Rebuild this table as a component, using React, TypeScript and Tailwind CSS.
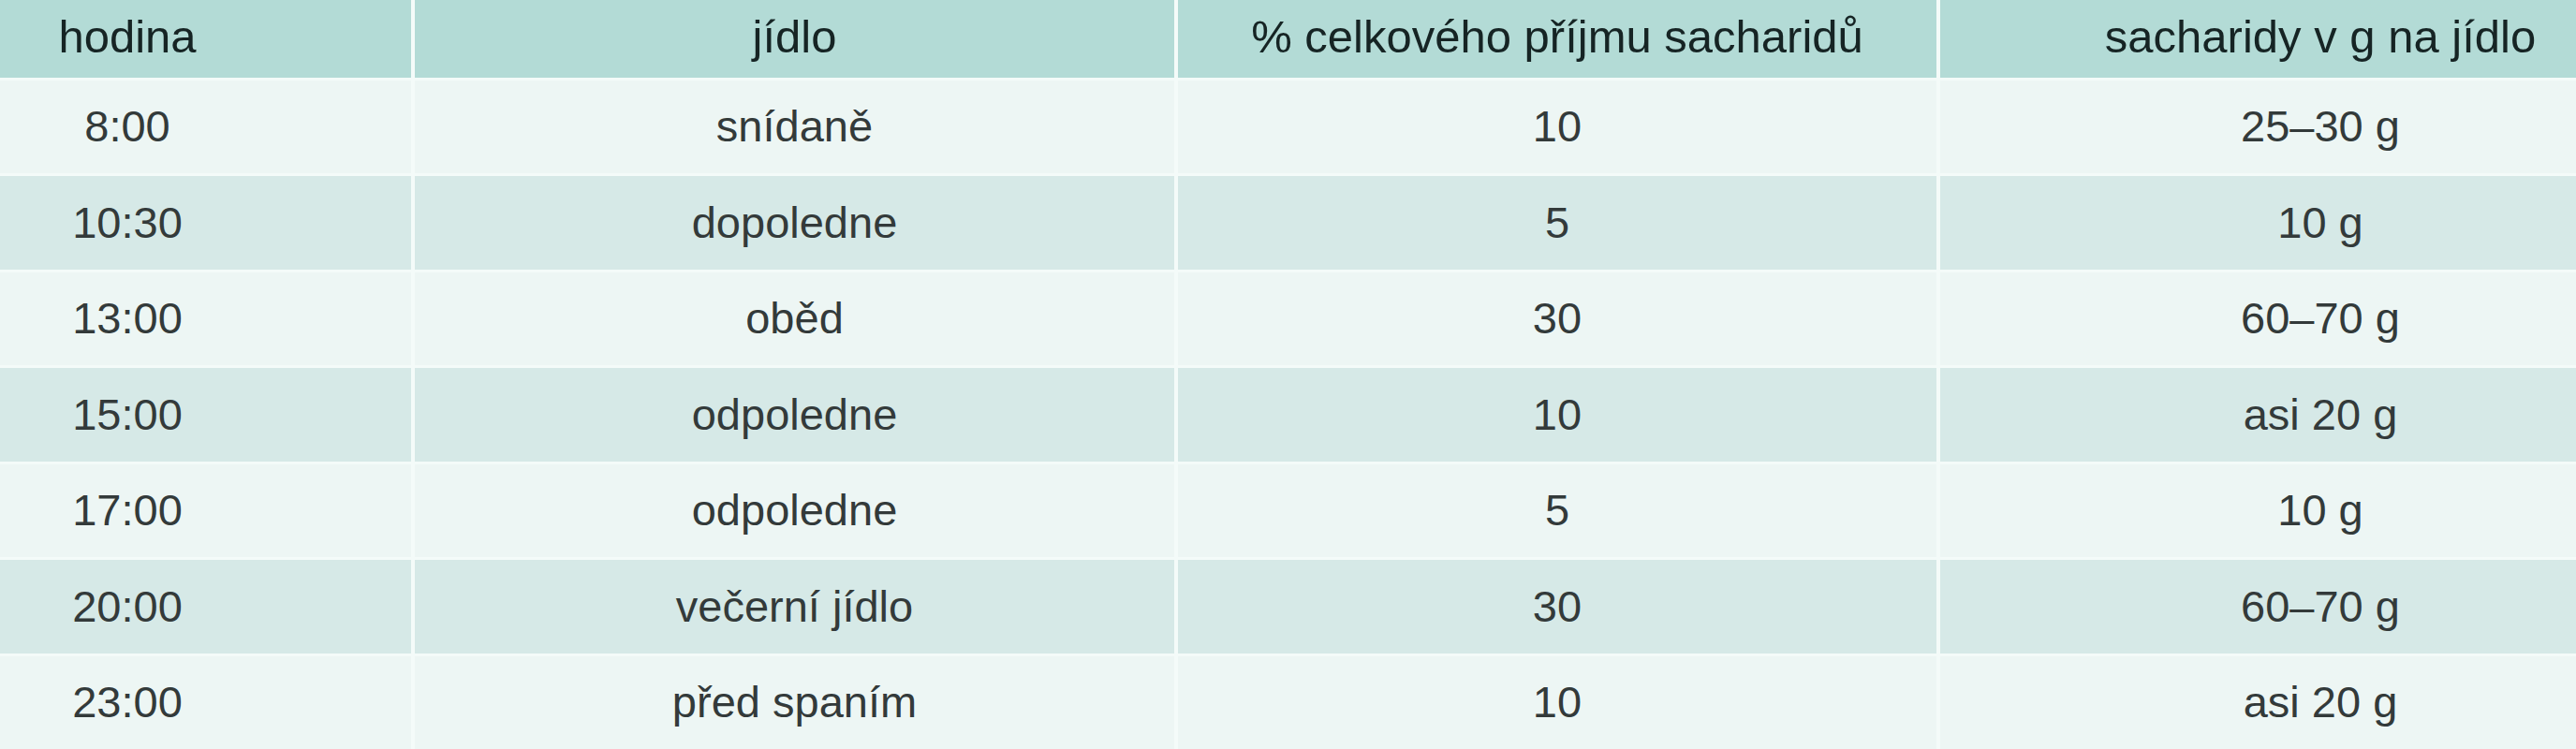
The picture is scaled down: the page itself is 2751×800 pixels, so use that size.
import React from "react";

const rows: [string, string, string, string][] = [
  ["8:00", "snídaně", "10", "25–30 g"],
  ["10:30", "dopoledne", "5", "10 g"],
  ["13:00", "oběd", "30", "60–70 g"],
  ["15:00", "odpoledne", "10", "asi 20 g"],
  ["17:00", "odpoledne", "5", "10 g"],
  ["20:00", "večerní jídlo", "30", "60–70 g"],
  ["23:00", "před spaním", "10", "asi 20 g"],
];

export default function App() {
  return (
    <div className="w-[2751px] h-[800px] overflow-hidden bg-[#f4fbf9]" style={{ fontFamily: '"Liberation Sans", Arial, sans-serif' }}>
      <div className="grid w-[2884px] h-[800px] grid-cols-[439px_811px_810px_812px] grid-rows-[83px_repeat(7,1fr)] gap-x-[4px] gap-y-[3px] bg-[#f4fbf9]">
        <div className="bg-[#b3dbd6] flex items-center justify-center pr-[167px] pb-[4px] text-[49px] text-[#162424]">hodina</div>
        <div className="bg-[#b3dbd6] flex items-center justify-center pb-[4px] text-[49px] text-[#162424]">jídlo</div>
        <div className="bg-[#b3dbd6] flex items-center justify-center pb-[4px] text-[49px] text-[#162424]">% celkového příjmu sacharidů</div>
        <div className="bg-[#b3dbd6] flex items-center justify-center pb-[4px] text-[49px] text-[#162424]">sacharidy v g na jídlo</div>
        {rows.map((r, i) => {
          const bg = i % 2 === 0 ? "bg-[#edf6f4]" : "bg-[#d6e9e7]";
          return (
            <React.Fragment key={i}>
              <div className={`${bg} flex items-center justify-center pr-[167px] text-[47px] text-[#333a3a]`}>{r[0]}</div>
              <div className={`${bg} flex items-center justify-center text-[47px] text-[#333a3a]`}>{r[1]}</div>
              <div className={`${bg} flex items-center justify-center text-[47px] text-[#333a3a]`}>{r[2]}</div>
              <div className={`${bg} flex items-center justify-center text-[47px] text-[#333a3a]`}>{r[3]}</div>
            </React.Fragment>
          );
        })}
      </div>
    </div>
  );
}
